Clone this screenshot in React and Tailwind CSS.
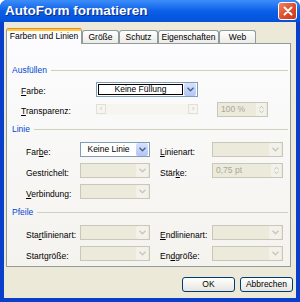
import React from "react"

const font = { fontFamily: '"Liberation Sans", Arial, sans-serif' }

const Chevron = ({ color = "#4D6185" }) => (
    <svg width="7" height="5" viewBox="0 0 7 5">
        <path d="M0.5 0.8 L3.5 3.8 L6.5 0.8" fill="none" stroke={color} strokeWidth="1.4" />
    </svg>
)

const Spin = () => (
    <svg width="5" height="9" viewBox="0 0 5 9">
        <path d="M0.5 3.5 L2.5 1.2 L4.5 3.5 M0.5 5.5 L2.5 7.8 L4.5 5.5" fill="none" stroke="#C9C7BA" strokeWidth="1" />
    </svg>
)

const Label = ({ before, u, after, className = "" }) => (
    <span className={`text-[8.5px] text-black ${className}`}>
        {before}<span className="underline underline-offset-1">{u}</span>{after}
    </span>
)

const Header = ({ children, h }) => (
    <div className={`flex items-center gap-[4px] ${h}`}>
        <span className="text-[8.5px] text-[#0046D5]">{children}</span>
        <div className="flex-1 h-px bg-[#D0D0BF]" />
    </div>
)

const Combo = ({ text, enabled }) => (
    <div className={`w-full h-[15px] flex items-center border ${enabled ? "border-[#7F9DB9] bg-white" : "border-[#C9C7BA] bg-[#EBEADB]"}`}>
        <span className="flex-1 text-center text-[8.5px] text-black">{text}</span>
        <div className={`w-[12px] h-[13px] mr-px flex items-center justify-center rounded-[2px] ${enabled ? "bg-gradient-to-b from-[#D6E2FD] to-[#B2C6F5]" : "bg-[#F2F1EA]"}`}>
            <Chevron color={enabled ? "#4D6185" : "#C9C7BA"} />
        </div>
    </div>
)

const SpinBox = ({ text, w }) => (
    <div className={`${w} h-[15px] flex items-center border border-[#C9C7BA] bg-[#EBEADB]`}>
        <span className="flex-1 pl-[3px] text-[8.5px] text-[#ACA899]">{text}</span>
        <div className="w-[10px] h-[13px] mr-px flex items-center justify-center bg-[#F2F1EA]">
            <Spin />
        </div>
    </div>
)

const Row = ({ left, right, leftCombo, rightCombo }) => (
    <div className="h-[21px] flex items-center pl-[14px]">
        <div className="w-[54px]">{left}</div>
        <div className="w-[70px]">{leftCombo}</div>
        <div className="w-[52px] ml-[10px]">{right}</div>
        <div className="w-[71px]">{rightCombo}</div>
    </div>
)

const tabs = [
    { name: "Größe", w: "w-[37px]" },
    { name: "Schutz", w: "w-[39px]" },
    { name: "Eigenschaften", w: "w-[61px]" },
    { name: "Web", w: "w-[37px]" },
]

export default function App() {
    return (
        <div style={font} className="w-[300px] h-[302px] flex flex-col bg-[#0A3FCB] rounded-t-[7px] overflow-hidden">

            {/* Title bar */}
            <div className="h-[22px] flex items-center pl-[5px] pr-[3px] bg-gradient-to-b from-[#3D8EF9] via-[#0B5FE8] to-[#0451D9]">
                <span className="text-white font-bold text-[13.5px] [text-shadow:1px_1px_0_#0A2E8C]">AutoForm formatieren</span>
                <div className="ml-auto w-[19px] h-[18px] rounded-[3px] border border-white bg-gradient-to-br from-[#EB8464] via-[#E0502C] to-[#C8391B] flex items-center justify-center">
                    <svg width="10" height="10" viewBox="0 0 10 10">
                        <path d="M1.5 1.5 L8.5 8.5 M8.5 1.5 L1.5 8.5" stroke="white" strokeWidth="2" strokeLinecap="round" />
                    </svg>
                </div>
            </div>

            {/* Body */}
            <div className="flex-1 mx-[4px] mb-[4px] bg-[#ECE9D8] flex flex-col">

                {/* Tabs */}
                <div className="h-[21px] flex items-end pl-[2px]">
                    <div className="relative z-10 -mb-px w-[76px] h-[16px] bg-[#FCFCFE] border-x border-[#919B9C] rounded-t-[3px] flex flex-col">
                        <div className="h-[1px] bg-[#E68B2C] rounded-t-[3px]" />
                        <div className="h-[2px] bg-[#FFC73C]" />
                        <span className="text-[8.5px] text-black text-center leading-[11px]">Farben und Linien</span>
                    </div>
                    {tabs.map(t => (
                        <div key={t.name} className={`${t.w} h-[13px] border-t border-x border-[#919B9C] rounded-t-[3px] bg-gradient-to-b from-white to-[#ECEBE6] flex items-center justify-center text-[8.5px] text-black`}>
                            {t.name}
                        </div>
                    ))}
                </div>

                {/* Panel */}
                <div className="ml-[2px] mr-[5px] h-[224px] border border-[#919B9C] bg-gradient-to-b from-[#FCFCFE] to-[#F4F3EE] flex flex-col pt-[19px] pl-[5px] pr-[2px]">

                    <Header h="h-[14px]">Ausfüllen</Header>

                    <div className="h-[20px] mt-[2px] flex items-center pl-[9px]">
                        <div className="w-[75px]"><Label u="F" after="arbe:" /></div>
                        <div className="w-[102px] h-[15px] flex items-center border border-[#7F9DB9] bg-white">
                            <div className="flex-1 h-[11px] mx-px border border-black flex items-center justify-center text-[8.5px] text-black">Keine Füllung</div>
                            <div className="w-[12px] h-[13px] mr-px flex items-center justify-center rounded-[2px] bg-gradient-to-b from-[#D6E2FD] to-[#B2C6F5]">
                                <Chevron />
                            </div>
                        </div>
                    </div>

                    <div className="h-[20px] flex items-center pl-[9px]">
                        <div className="w-[75px]"><Label u="T" after="ransparenz:" /></div>
                        <div className="w-[102px] h-[11px] flex items-center justify-between bg-[#F6F5F0]">
                            <div className="w-[10px] h-[10px] flex items-center justify-center border border-[#E2E0D5] text-[8px] text-[#C9C7BA] leading-none">‹</div>
                            <div className="w-[10px] h-[10px] flex items-center justify-center border border-[#E2E0D5] text-[8px] text-[#C9C7BA] leading-none">›</div>
                        </div>
                        <div className="ml-[19px]"><SpinBox text="100 %" w="w-[51px]" /></div>
                    </div>

                    <Header h="h-[20px]">Linie</Header>

                    <Row
                        left={<Label before="Far" u="b" after="e:" />}
                        leftCombo={<Combo text="Keine Linie" enabled />}
                        right={<Label u="L" after="inienart:" />}
                        rightCombo={<Combo text="" />}
                    />
                    <Row
                        left={<Label before="Gestrichelt:" />}
                        leftCombo={<Combo text="" />}
                        right={<Label before="Stär" u="k" after="e:" />}
                        rightCombo={<SpinBox text="0,75 pt" w="w-[71px]" />}
                    />
                    <Row
                        left={<Label u="V" after="erbindung:" />}
                        leftCombo={<Combo text="" />}
                    />

                    <Header h="h-[20px]">Pfeile</Header>

                    <Row
                        left={<Label before="Sta" u="r" after="tlinienart:" />}
                        leftCombo={<Combo text="" />}
                        right={<Label u="E" after="ndlinienart:" />}
                        rightCombo={<Combo text="" />}
                    />
                    <Row
                        left={<Label before="Startgröße:" />}
                        leftCombo={<Combo text="" />}
                        right={<Label before="En" u="d" after="größe:" />}
                        rightCombo={<Combo text="" />}
                    />
                </div>

                {/* Buttons */}
                <div className="mt-[10px] flex justify-end gap-[5px] pr-[3px]">
                    <div className="w-[53px] h-[15px] rounded-[3px] border border-[#003C74] bg-gradient-to-b from-white to-[#E6E5DE] flex items-center justify-center text-[8.5px] text-black">OK</div>
                    <div className="w-[53px] h-[15px] rounded-[3px] border border-[#003C74] bg-gradient-to-b from-white to-[#E6E5DE] flex items-center justify-center text-[8.5px] text-black">Abbrechen</div>
                </div>
            </div>
        </div>
    )
}
